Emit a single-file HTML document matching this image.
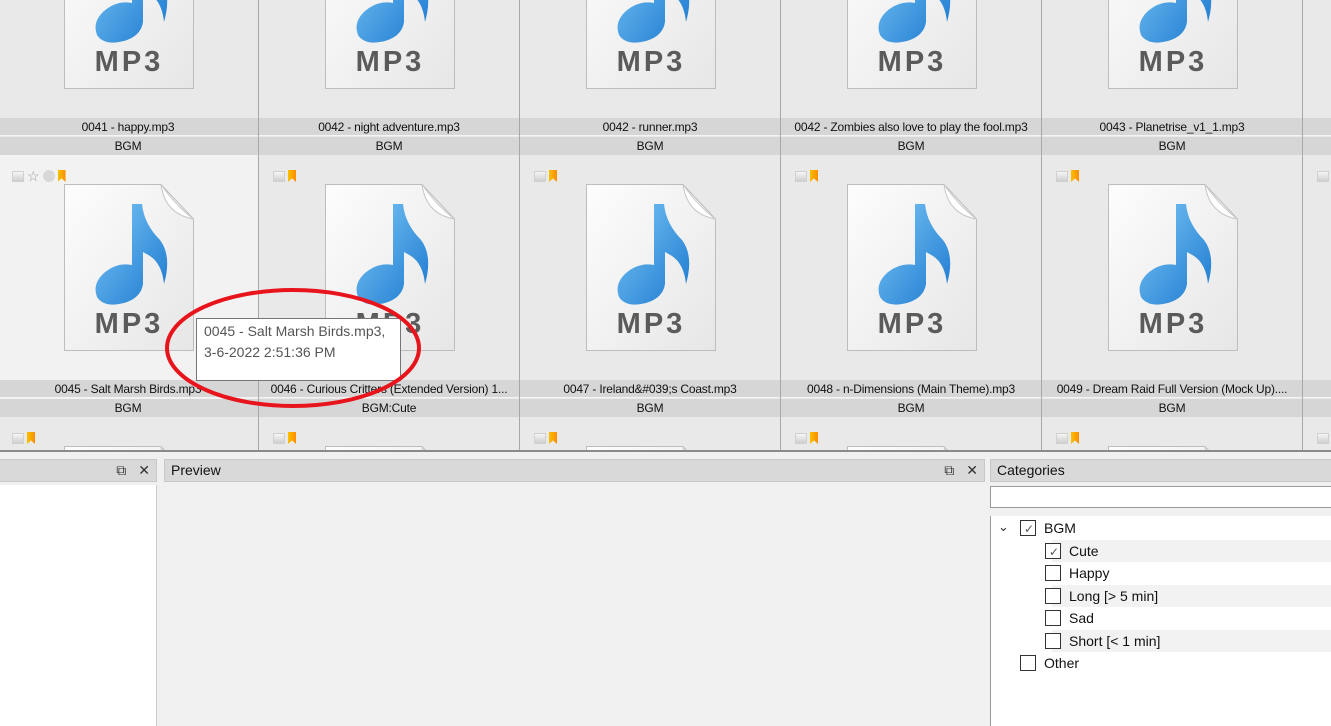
<!DOCTYPE html>
<html><head><meta charset="utf-8"><style>
*{box-sizing:border-box;margin:0;padding:0}
body{width:1331px;height:726px;overflow:hidden;background:#f0f0f0;font-family:"Liberation Sans",Tahoma,sans-serif;position:relative}
#grid{position:absolute;left:0;top:0;width:1331px;height:450px;overflow:hidden;background:#e9e9e9}
.cell{position:absolute;width:261px;height:262px;background:#e9e9e9;border-right:1px solid #a8a8a8;border-bottom:1px solid #b8b8b8}
.cell.hov{background:#f2f2f2}
.lab{position:absolute;left:0;width:260px;height:18px;background:#d6d6d6;font-size:12px;line-height:18px;text-align:center;color:#111;white-space:nowrap;overflow:hidden;letter-spacing:-0.2px}
.l1{top:225px;border-bottom:1px solid #f4f4f4}
.l2{top:244px}
.doc{position:absolute;left:66px;top:29px;width:130px;height:167px}
.mp3{position:absolute;left:0;width:130px;top:128px;text-align:center;font-weight:bold;font-size:29px;letter-spacing:3px;color:#5b5b5b;line-height:24px}
.ic{position:absolute;top:15px;left:14px;display:flex;gap:3px;align-items:center}
.sq{width:12px;height:11px;background:linear-gradient(#f6f6f6,#cfcfcf);border:1px solid #d0d0d0}
.bm{width:8px;height:12px;background:linear-gradient(90deg,#f7c000,#ff8c00);clip-path:polygon(0 0,100% 0,100% 100%,50% 70%,0 100%)}
.panel{position:absolute;top:459px;height:23px;background:#d9d9d9;border:1px solid #c8c8c8;font-size:14px;line-height:21px;padding-left:6px;color:#111}
.btns{position:absolute;right:6px;top:0;font-size:14px;color:#333}
.cb{display:inline-block;width:16px;height:16px;border:1px solid #333;background:#fff;vertical-align:middle;position:relative}
.row{position:absolute;height:22px;font-size:14px;line-height:22px;color:#111;width:345px}
</style></head><body>
<svg width="0" height="0" style="position:absolute"><defs>
<linearGradient id="pg" x1="0" y1="0" x2="1" y2="1"><stop offset="0" stop-color="#fdfdfd"/><stop offset="1" stop-color="#e6e6e6"/></linearGradient>
<linearGradient id="nt" x1="0" y1="0" x2="1" y2="1"><stop offset="0" stop-color="#7cc8f6"/><stop offset="1" stop-color="#1b78cf"/></linearGradient>
<symbol id="doc" viewBox="0 0 130 167">
<path d="M0.5 0.5H97L129.5 35V166.5H0.5Z" fill="url(#pg)" stroke="#bdbdbd"/>
<path d="M97 0.5Q101 30 129.5 35Q112 22 97 0.5Z" fill="#fff" stroke="#c8c8c8"/>
<path d="M68 20L78 20Q80 40 96 56Q108 72 100 100Q98 80 86 72L79 68L79 100Q77 114 60 119Q40 124 33 113Q28 100 40 89Q53 78 68 81Z" fill="url(#nt)"/>
</symbol></defs></svg>
<div id="grid">
</div>
<script>
const names=[["0041 - happy.mp3","0042 - night adventure.mp3","0042 - runner.mp3","0042 - Zombies also love to play the fool.mp3","0043 - Planetrise_v1_1.mp3",""],
["0045 - Salt Marsh Birds.mp3","0046 - Curious Critters (Extended Version) 1...","0047 - Ireland&amp;#039;s Coast.mp3","0048 - n-Dimensions (Main Theme).mp3","0049 - Dream Raid Full Version (Mock Up)....",""],
["","","","","",""]];
const cats=[["BGM","BGM","BGM","BGM","BGM",""],["BGM","BGM:Cute","BGM","BGM","BGM",""],["","","","","",""]];
let h="";
for(let r=0;r<3;r++)for(let c=0;c<6;c++){
 const top=-107+r*262,left=c*261;
 h+=`<div class="cell${r==1&&c==0?' hov':''}" style="left:${left-2}px;top:${top}px">`;
 h+=`<div class="ic">${r==1&&c==0?'<div class="sq"></div><span style="font-size:14px;color:#999;line-height:11px">☆</span><div style="width:12px;height:12px;border-radius:50%;background:#d8d8d8"></div>':'<div class="sq"></div>'}<div class="bm"></div></div>`;
 h+=`<div class="doc"><svg width="130" height="167"><use href="#doc"/></svg><div class="mp3">MP3</div></div>`;
 h+=`<div class="lab l1">${names[r][c]}</div><div class="lab l2">${cats[r][c]}</div></div>`;
}
document.getElementById('grid').innerHTML=h;
</script>
<div style="position:absolute;left:0;top:450px;width:1331px;height:2px;background:#8a8a8a"></div>
<div class="panel" style="left:-2px;width:159px"><div class="btns" style="right:6px"><span style="margin-right:12px">⧉</span>✕</div></div>
<div style="position:absolute;left:0;top:485px;width:157px;height:241px;background:#fff;border-right:1px solid #ccc"></div>
<div class="panel" style="left:164px;width:821px">Preview<div class="btns"><span style="margin-right:12px">⧉</span>✕</div></div>
<div class="panel" style="left:990px;width:345px">Categories</div>
<div style="position:absolute;left:990px;top:486px;width:345px;height:22px;background:#fff;border:1px solid #999"></div>
<div style="position:absolute;left:990px;top:516px;width:345px;height:210px;background:#fff;border-left:1px solid #999"></div>
<div class="row" style="left:991px;top:517px"><span style="position:absolute;left:7px;top:-1px;font-size:13px;color:#333">⌄</span><span class="cb" style="position:absolute;left:29px;top:3px"><span style="position:absolute;left:3px;top:-3px;font-size:12px;color:#555">✓</span></span><span style="position:absolute;left:53px">BGM</span></div>
<div class="row" style="left:1052px;top:540px;background:#f2f2f2"><span class="cb" style="position:absolute;left:-7px;top:3px"><span style="position:absolute;left:3px;top:-3px;font-size:12px;color:#555">✓</span></span><span style="position:absolute;left:17px">Cute</span></div>
<div class="row" style="left:1052px;top:562px"><span class="cb" style="position:absolute;left:-7px;top:3px"></span><span style="position:absolute;left:17px">Happy</span></div>
<div class="row" style="left:1052px;top:585px;background:#f2f2f2"><span class="cb" style="position:absolute;left:-7px;top:3px"></span><span style="position:absolute;left:17px">Long [&gt; 5 min]</span></div>
<div class="row" style="left:1052px;top:607px"><span class="cb" style="position:absolute;left:-7px;top:3px"></span><span style="position:absolute;left:17px">Sad</span></div>
<div class="row" style="left:1052px;top:630px;background:#f2f2f2"><span class="cb" style="position:absolute;left:-7px;top:3px"></span><span style="position:absolute;left:17px">Short [&lt; 1 min]</span></div>
<div class="row" style="left:991px;top:652px"><span class="cb" style="position:absolute;left:29px;top:3px"></span><span style="position:absolute;left:53px">Other</span></div>
<div style="position:absolute;left:196px;top:318px;width:205px;height:63px;background:#fff;border:1px solid #767676;font-size:14px;line-height:21px;color:#555;padding:2px 7px">0045 - Salt Marsh Birds.mp3,<br>3-6-2022 2:51:36 PM</div>
<svg style="position:absolute;left:0;top:0" width="1331" height="726"><ellipse cx="293" cy="348" rx="126" ry="58" fill="none" stroke="#e8141c" stroke-width="4"/></svg>
</body></html>
